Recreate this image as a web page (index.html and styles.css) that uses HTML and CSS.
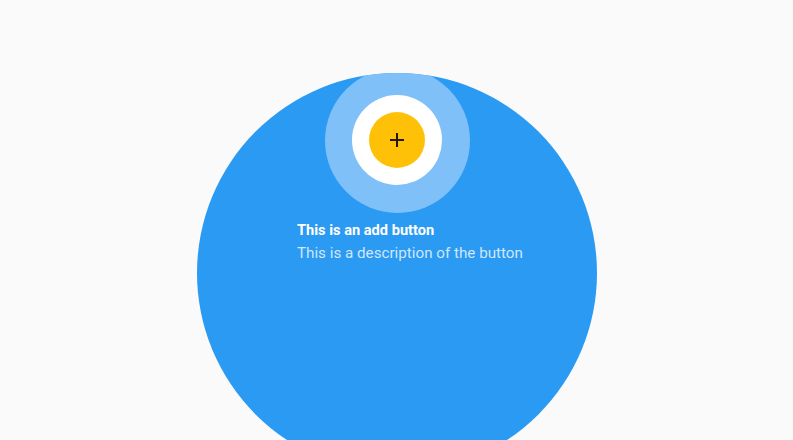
FILE: index.html
```html
<!DOCTYPE html>
<html lang="en">
<head>
<meta charset="utf-8">
<title>Feature discovery</title>
<link rel="stylesheet" href="styles.css">
</head>
<body>
<div class="screen">
  <div class="backdrop">
    <div class="pulse"></div>
    <div class="overlay-text">
      <div class="title">This is an add button</div>
      <div class="description">This is a description of the button</div>
    </div>
  </div>
  <div class="target">
    <button class="fab" aria-label="Add">
      <svg class="fab-icon" viewBox="0 0 24 24" width="24" height="24" aria-hidden="true">
        <path d="M19 13h-6v6h-2v-6H5v-2h6V5h2v6h6v2z"/>
      </svg>
    </button>
  </div>
</div>
</body>
</html>
```
FILE: styles.css
```css
html, body {
  margin: 0;
  padding: 0;
}
body {
  background: #fafafa;
  font-family: Roboto, "Liberation Sans", Arial, sans-serif;
  overflow: hidden;
}
.screen {
  position: relative;
  width: 793px;
  height: 440px;
  overflow: hidden;
}
.backdrop {
  position: absolute;
  left: 197px;
  top: 73px;
  width: 400px;
  height: 400px;
  border-radius: 50%;
  background: #2a9af3;
  overflow: hidden;
  box-sizing: border-box;
  padding: 147px 0 0 100px;
}
.pulse {
  position: absolute;
  left: 127.5px;
  top: -5.5px;
  width: 145px;
  height: 145px;
  border-radius: 50%;
  background: #7fc0f8;
}
.overlay-text {
  position: relative;
  display: flex;
  flex-direction: column;
  gap: 1px;
}
.title {
  color: #ffffff;
  font-size: 14.6px;
  font-weight: 700;
  line-height: 20px;
}
.description {
  color: rgba(255, 255, 255, 0.78);
  font-size: 15.2px;
  line-height: 24px;
}
.target {
  position: absolute;
  left: 352px;
  top: 95px;
  width: 90px;
  height: 90px;
  border-radius: 50%;
  background: #ffffff;
  display: flex;
  align-items: center;
  justify-content: center;
}
.fab {
  width: 56px;
  height: 56px;
  border: 0;
  padding: 0;
  border-radius: 50%;
  background: #ffc107;
  display: flex;
  align-items: center;
  justify-content: center;
}
.fab-icon {
  fill: rgba(0, 0, 0, 0.87);
}
```
